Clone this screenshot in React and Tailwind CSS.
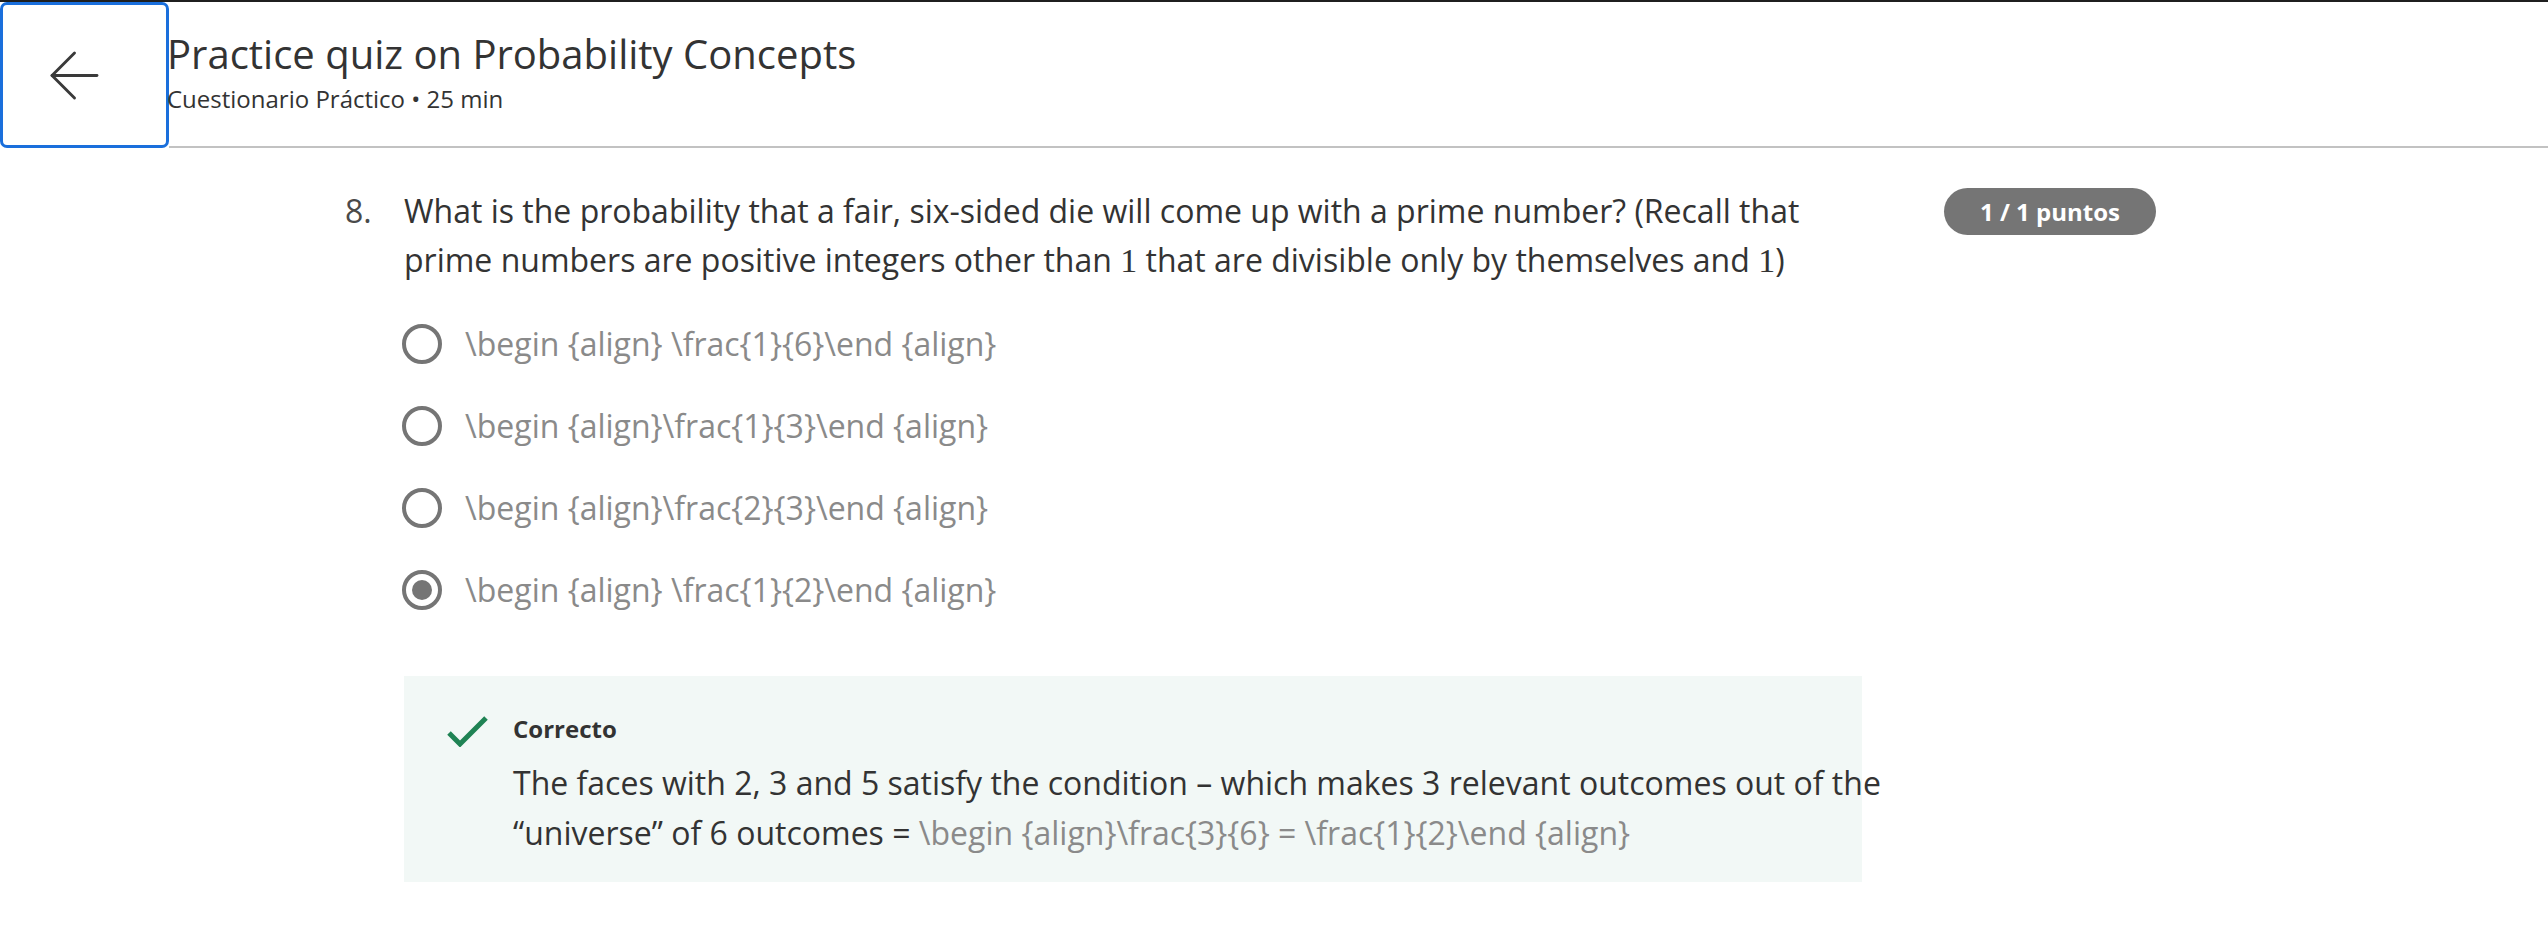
import { ArrowLeft } from 'lucide-react'

const options = [
  { text: '\\begin {align} \\frac{1}{6}\\end {align}', checked: false },
  { text: '\\begin {align}\\frac{1}{3}\\end {align}', checked: false },
  { text: '\\begin {align}\\frac{2}{3}\\end {align}', checked: false },
  { text: '\\begin {align} \\frac{1}{2}\\end {align}', checked: true },
]

function Radio({ checked }) {
  return (
    <div className="w-[40px] h-[40px] rounded-full border-[4px] border-[#757575] flex items-center justify-center shrink-0">
      {checked && <div className="w-[20px] h-[20px] rounded-full bg-[#757575]" />}
    </div>
  )
}

export default function App() {
  return (
    <div className="min-h-screen bg-white text-[#333] font-['Open_Sans',sans-serif]">
      <header className="flex border-t-[2px] border-[#1f1f1f]">
        <button className="w-[169px] h-[146px] shrink-0 rounded-[7px] border-[3px] border-[#1a6fdc] bg-white flex items-center justify-center pr-[20px] text-[#3a3a3a]">
          <ArrowLeft size={77} strokeWidth={0.9} />
        </button>
        <div className="flex-1 border-b-[2px] border-[#c2c2c2] pt-[30px]">
          <h1 className="text-[40px] leading-[44px] text-[#333] -ml-[2px]">Practice quiz on Probability Concepts</h1>
          <p className="mt-[9px] text-[24px] leading-[28px] text-[#333] -ml-[2px]">Cuestionario Práctico • 25 min</p>
        </div>
      </header>

      <main className="pl-[345px] pt-[38px]">
        <div className="flex">
          <div className="w-[59px] text-[32px] leading-[49px] text-[#4a4a4a]">8.</div>
          <div className="w-[1540px]">
            <p className="w-[1420px] text-[32px] leading-[49px] text-[#333]">
              What is the probability that a fair, six-sided die will come up with a prime number? (Recall that
              prime numbers are positive integers other than{' '}
              <span className="font-['Liberation_Serif',serif] text-[34px] leading-[40px]">1</span> that are divisible only by
              themselves and <span className="font-['Liberation_Serif',serif] text-[34px] leading-[40px]">1</span>)
            </p>

            <div className="mt-[35px] flex flex-col gap-[33px] -ml-[2px]">
              {options.map((o, i) => (
                <label key={i} className="flex items-center gap-[23px] h-[49px]">
                  <Radio checked={o.checked} />
                  <span className="text-[32px] leading-[49px] text-[#8a8a8a]">{o.text}</span>
                </label>
              ))}
            </div>

            <div className="mt-[62px] w-[1458px] h-[206px] bg-[#f2f8f6] pl-[43px] pt-[38px] flex gap-[25px]">
              <svg viewBox="0 0 41 31" className="w-[41px] h-[31px] shrink-0 mt-[2px]">
                <path d="M2 17 L13 28 L39 2" fill="none" stroke="#1f8354" strokeWidth="5" />
              </svg>
              <div className="-mt-[2px]">
                <div className="text-[24px] leading-[34px] font-bold text-[#333]">Correcto</div>
                <p className="mt-[12px] w-[1390px] text-[32px] leading-[50px] text-[#333]">
                  The faces with 2, 3 and 5 satisfy the condition – which makes 3 relevant outcomes out of the
                  “universe” of 6 outcomes ={' '}
                  <span className="text-[#8a8a8a]">\begin {'{align}'}\frac{'{3}{6}'} = \frac{'{1}{2}'}\end {'{align}'}</span>
                </p>
              </div>
            </div>
          </div>
          <div className="pt-[2px]">
            <span className="inline-flex items-center justify-center w-[212px] h-[47px] rounded-full bg-[#757575] text-white text-[24px] font-bold">
              1 / 1 puntos
            </span>
          </div>
        </div>
      </main>
    </div>
  )
}
